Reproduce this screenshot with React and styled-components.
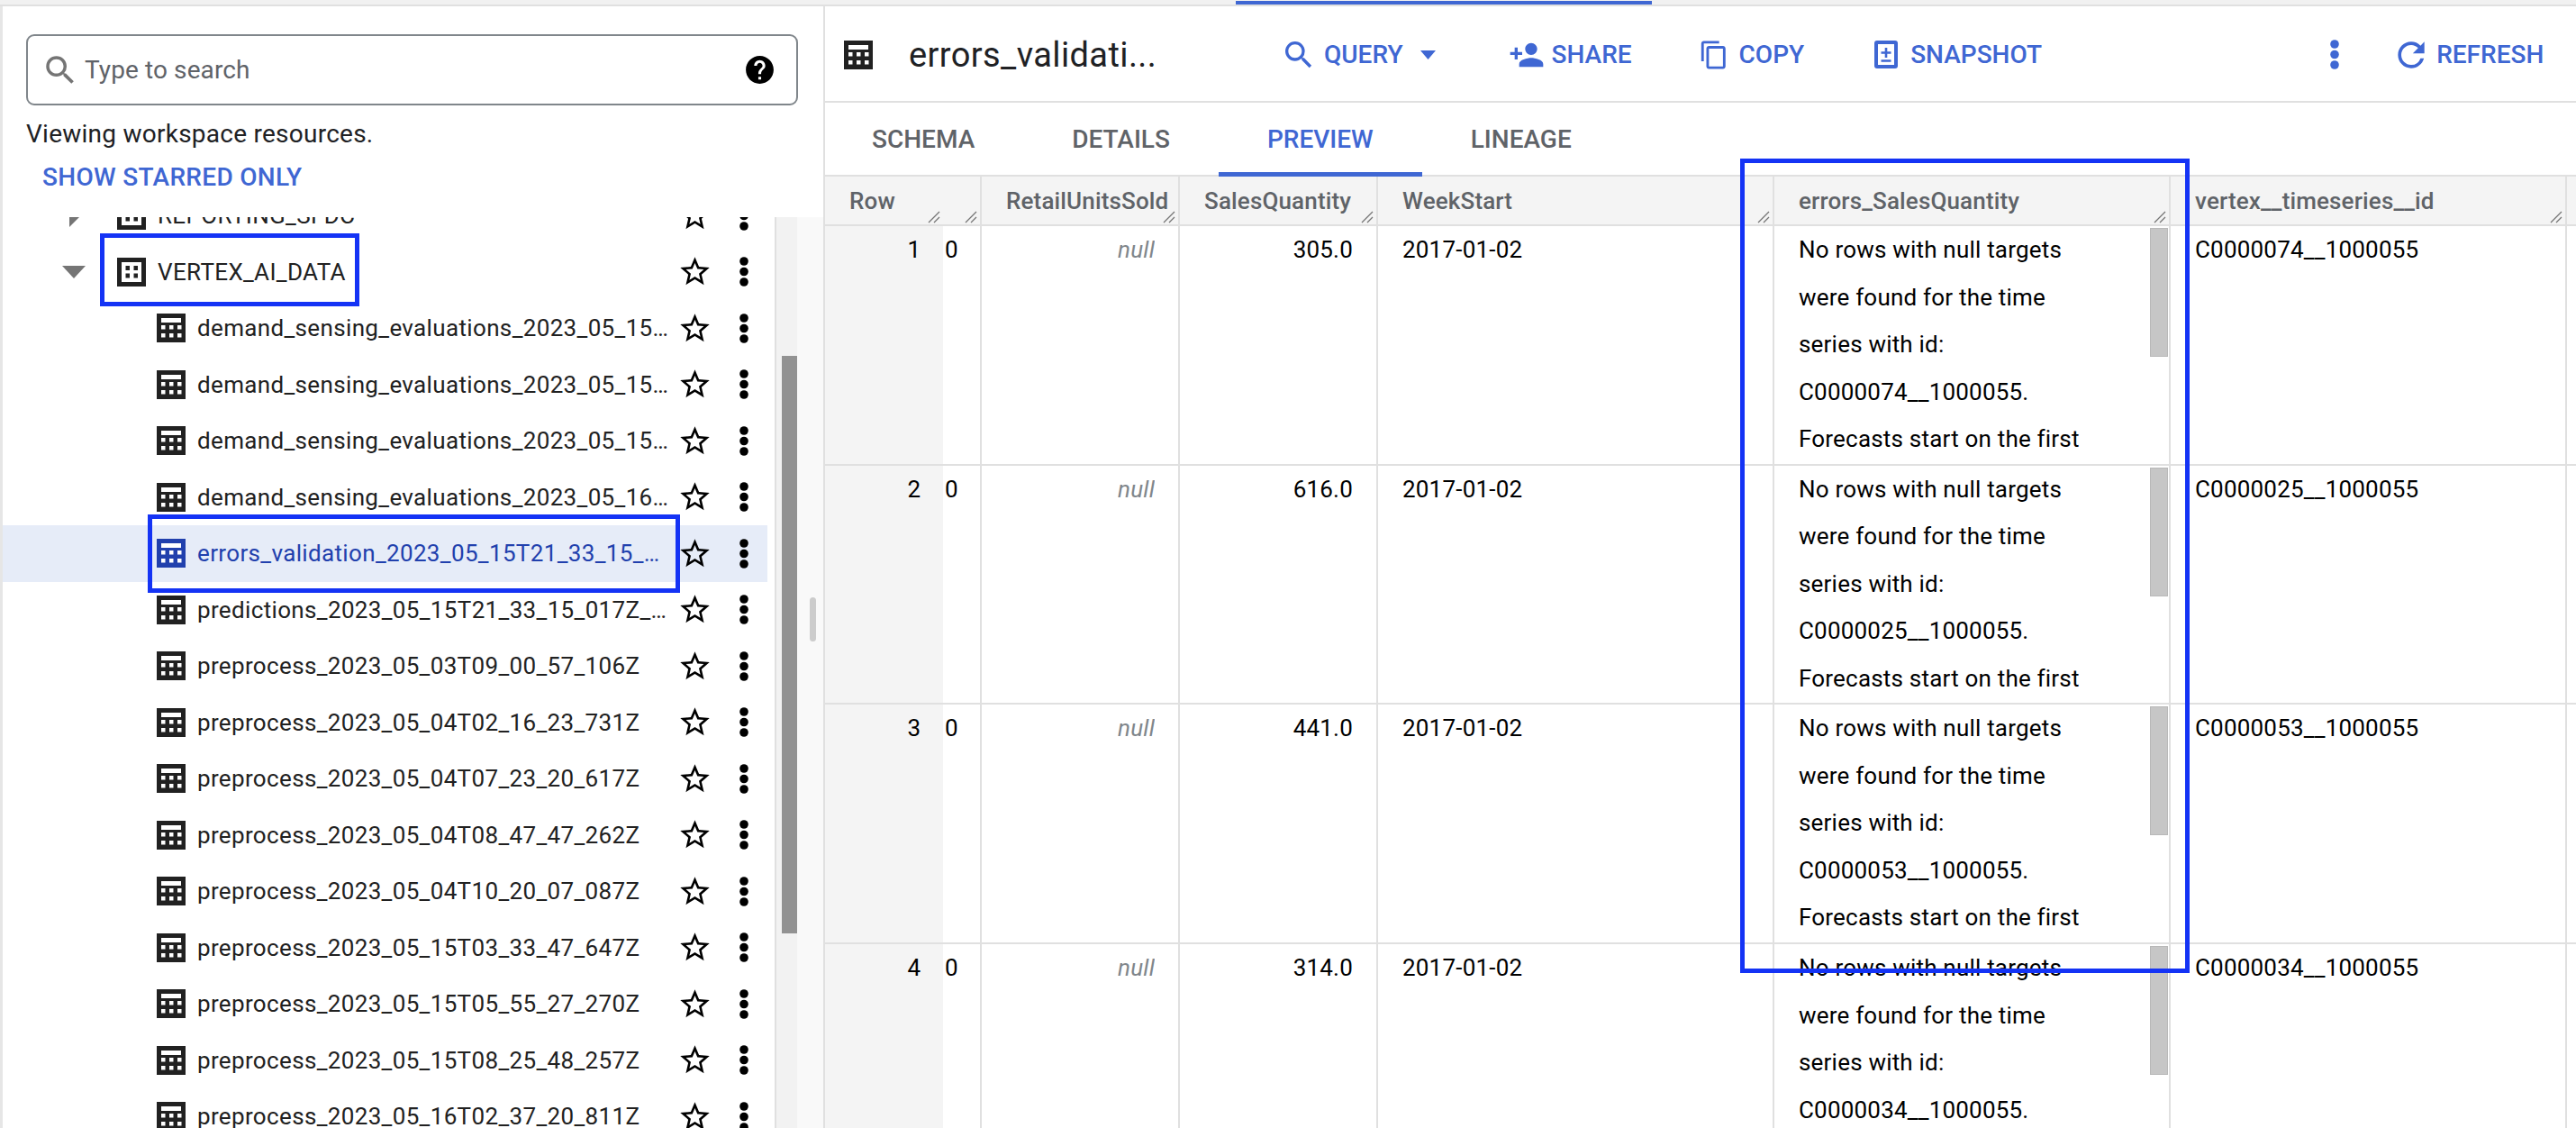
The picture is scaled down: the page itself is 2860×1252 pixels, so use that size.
import React from 'react';
import styled, { createGlobalStyle } from 'styled-components';
import { MdSearch, MdHelp, MdStarBorder, MdPersonAdd, MdContentCopy, MdRefresh } from 'react-icons/md';

const TABLES = [
  'demand_sensing_evaluations_2023_05_15T21_33_15_017Z_a',
  'demand_sensing_evaluations_2023_05_15T21_33_15_017Z_b',
  'demand_sensing_evaluations_2023_05_15T21_33_15_017Z_c',
  'demand_sensing_evaluations_2023_05_16T02_37_20_811Z_a',
  'errors_validation_2023_05_15T21_33_15_017Z_forecast',
  'predictions_2023_05_15T21_33_15_017Z_forecast_eval',
  'preprocess_2023_05_03T09_00_57_106Z',
  'preprocess_2023_05_04T02_16_23_731Z',
  'preprocess_2023_05_04T07_23_20_617Z',
  'preprocess_2023_05_04T08_47_47_262Z',
  'preprocess_2023_05_04T10_20_07_087Z',
  'preprocess_2023_05_15T03_33_47_647Z',
  'preprocess_2023_05_15T05_55_27_270Z',
  'preprocess_2023_05_15T08_25_48_257Z',
  'preprocess_2023_05_16T02_37_20_811Z',
];

const ROWS = [
  { n: 1, qty: '305.0', id: 'C0000074__1000055' },
  { n: 2, qty: '616.0', id: 'C0000025__1000055' },
  { n: 3, qty: '441.0', id: 'C0000053__1000055' },
  { n: 4, qty: '314.0', id: 'C0000034__1000055' },
];

const COLS = [131, 43, 220, 220, 440, 440, 440];

const errorLines = (id) => [
  'No rows with null targets',
  'were found for the time',
  'series with id:',
  `${id}.`,
  'Forecasts start on the first',
];

const TableIcon = ({ size = 32 }) => (
  <svg width={size} height={size} viewBox="0 0 32 32">
    <rect width="32" height="32" fill="currentColor" />
    <rect x="5" y="5" width="22" height="5" fill="#fff" />
    <rect x="5" y="13" width="4.5" height="4.5" fill="#fff" />
    <rect x="14" y="13" width="4.5" height="4.5" fill="#fff" />
    <rect x="23" y="13" width="4.5" height="4.5" fill="#fff" />
    <rect x="5" y="22" width="4.5" height="4.5" fill="#fff" />
    <rect x="14" y="22" width="4.5" height="4.5" fill="#fff" />
    <rect x="23" y="22" width="4.5" height="4.5" fill="#fff" />
  </svg>
);

const DatasetIcon = () => (
  <svg width="32" height="32" viewBox="0 0 32 32">
    <path fill="#212121" fillRule="evenodd" d="M0 0h32v32H0zM5 5v22h22V5z" />
    <rect x="9.5" y="9" width="4.5" height="5" fill="#212121" />
    <rect x="18.5" y="9" width="4.5" height="5" fill="#212121" />
    <rect x="9.5" y="17.5" width="4.5" height="5" fill="#212121" />
    <rect x="18.5" y="17.5" width="4.5" height="5" fill="#212121" />
  </svg>
);

const Dots = ({ height = 33 }) => (
  <svg width="10" height={height} viewBox="0 0 10 33">
    <circle cx="5" cy="5" r="4.8" fill="currentColor" />
    <circle cx="5" cy="16.5" r="4.8" fill="currentColor" />
    <circle cx="5" cy="28" r="4.8" fill="currentColor" />
  </svg>
);

const Caret = ({ open }) => (
  <svg width="26" height="26" viewBox="0 0 26 26">
    {open ? <path d="M0 6h26L13 20z" fill="#757575" /> : <path d="M8 0l13 13-13 13z" fill="#757575" />}
  </svg>
);

const Grip = () => (
  <svg width="14" height="14" viewBox="0 0 14 14">
    <path d="M13 1L1 13M13 7l-6 6" stroke="#757575" strokeWidth="1.3" fill="none" />
  </svg>
);

const SnapshotIcon = () => (
  <svg width="26" height="31" viewBox="0 0 26 31">
    <rect x="2" y="2" width="22" height="27" rx="1" fill="none" stroke="currentColor" strokeWidth="4" />
    <path d="M13 8v11M7.5 13.5h11M7.5 22.5h11" stroke="currentColor" strokeWidth="2.6" fill="none" />
  </svg>
);

const DownArrow = () => (
  <svg width="17" height="10" viewBox="0 0 17 10">
    <path d="M0 0h17L8.5 10z" fill="currentColor" />
  </svg>
);

const App = () => {
  return (
    <Page>
      <GlobalStyle />
      <TopStrip>
        <ActiveBar />
      </TopStrip>
      <Body>
        <LeftPanel>
          <LeftHead>
            <SearchBox>
              <MdSearch size={42} color="#757575" />
              <Placeholder>Type to search</Placeholder>
              <MdHelp size={37} color="#000" />
            </SearchBox>
            <Viewing>Viewing workspace resources.</Viewing>
            <Starred>SHOW STARRED ONLY</Starred>
          </LeftHead>
          <TreeArea>
            <TreeList>
              <TreeInner>
                <TreeRow $indent={63}>
                  <CaretSlot><Caret /></CaretSlot>
                  <DatasetIcon />
                  <RowName>REPORTING_SFDC</RowName>
                  <RowStar><MdStarBorder size={39} /></RowStar>
                  <RowDots><Dots /></RowDots>
                </TreeRow>
                <TreeRow $indent={63}>
                  <CaretSlot><Caret open /></CaretSlot>
                  <DatasetIcon />
                  <RowName>VERTEX_AI_DATA</RowName>
                  <RowStar><MdStarBorder size={39} /></RowStar>
                  <RowDots><Dots /></RowDots>
                </TreeRow>
                {TABLES.map((name) => {
                  const selected = name.startsWith('errors');
                  return (
                    <TreeRow key={name} $indent={171} $selected={selected}>
                      <TableIcon />
                      <RowName>{name}</RowName>
                      <RowStar><MdStarBorder size={39} /></RowStar>
                      <RowDots><Dots /></RowDots>
                    </TreeRow>
                  );
                })}
              </TreeInner>
            </TreeList>
            <ScrollTrack>
              <ScrollThumb />
            </ScrollTrack>
            <Splitter>
              <SplitGrip />
            </Splitter>
          </TreeArea>
        </LeftPanel>

        <RightPanel>
          <Toolbar>
            <ToolTitleIcon><TableIcon /></ToolTitleIcon>
            <Title>errors_validati...</Title>
            <ToolButton $left={142}>
              <MdSearch size={40} />
              <ToolLabel>QUERY</ToolLabel>
              <ArrowSlot><DownArrow /></ArrowSlot>
            </ToolButton>
            <ToolButton $left={81}>
              <MdPersonAdd size={40} />
              <ToolLabel>SHARE</ToolLabel>
            </ToolButton>
            <ToolButton $left={74}>
              <MdContentCopy size={34} />
              <ToolLabel $gap={11}>COPY</ToolLabel>
            </ToolButton>
            <ToolButton $left={78}>
              <SnapshotIcon />
              <ToolLabel $gap={14}>SNAPSHOT</ToolLabel>
            </ToolButton>
            <ToolButton $left={320}>
              <Dots height={35} />
            </ToolButton>
            <ToolButton $left={58}>
              <MdRefresh size={44} />
              <ToolLabel $gap={6}>REFRESH</ToolLabel>
            </ToolButton>
          </Toolbar>
          <Tabs>
            <Tab>SCHEMA</Tab>
            <Tab>DETAILS</Tab>
            <Tab $active>PREVIEW</Tab>
            <Tab>LINEAGE</Tab>
          </Tabs>
          <TableHead>
            <HeadCell $width={COLS[0]} $plain>Row<HandleSpot><Grip /></HandleSpot></HeadCell>
            <HeadCell $width={COLS[1]} $blank><HandleSpot><Grip /></HandleSpot></HeadCell>
            <HeadCell $width={COLS[2]}>RetailUnitsSold<HandleSpot><Grip /></HandleSpot></HeadCell>
            <HeadCell $width={COLS[3]}>SalesQuantity<HandleSpot><Grip /></HandleSpot></HeadCell>
            <HeadCell $width={COLS[4]}>WeekStart<HandleSpot><Grip /></HandleSpot></HeadCell>
            <HeadCell $width={COLS[5]}>errors_SalesQuantity<HandleSpot><Grip /></HandleSpot></HeadCell>
            <HeadCell $width={COLS[6]}>vertex__timeseries__id<HandleSpot><Grip /></HandleSpot></HeadCell>
          </TableHead>
          {ROWS.map((row) => (
            <DataRow key={row.n}>
              <RowNumber $width={COLS[0]}>{row.n}</RowNumber>
              <ZeroCell $width={COLS[1]}>0</ZeroCell>
              <DataCell $width={COLS[2]} $right><NullText>null</NullText></DataCell>
              <DataCell $width={COLS[3]} $right>{row.qty}</DataCell>
              <DataCell $width={COLS[4]}>2017-01-02</DataCell>
              <DataCell $width={COLS[5]}>
                {errorLines(row.id).map((line) => <TextLine key={line}>{line}</TextLine>)}
                <CellThumb />
              </DataCell>
              <DataCell $width={COLS[6]}>{row.id}</DataCell>
            </DataRow>
          ))}
        </RightPanel>
      </Body>

      <Callout $x={111} $y={259} $w={288} $h={81} />
      <Callout $x={164} $y={571} $w={591} $h={87} />
      <Callout $x={1932} $y={176} $w={499} $h={904} />
    </Page>
  );
};

const GlobalStyle = createGlobalStyle`
  html, body {
    margin: 0;
    padding: 0;
    background: #ffffff;
  }
  * {
    box-sizing: border-box;
  }
`;

const Page = styled.div`
  position: relative;
  width: 2860px;
  height: 1252px;
  overflow: hidden;
  font-family: Roboto, "Liberation Sans", sans-serif;
  color: #202124;
  background: #ffffff;
`;

const TopStrip = styled.div`
  height: 7px;
  padding: 1px 0 0 1372px;
  background: #f1f1f1;
  border-bottom: 2px solid #e0e0e0;
`;

const ActiveBar = styled.div`
  width: 462px;
  height: 4px;
  background: #3f67d3;
`;

const Body = styled.div`
  display: flex;
  height: 1245px;
`;

const LeftPanel = styled.aside`
  width: 914px;
  display: flex;
  flex-direction: column;
  border-left: 3px solid #e6e6e6;
`;

const LeftHead = styled.div`
  height: 234px;
  padding: 31px 28px 0 26px;
  flex-shrink: 0;
`;

const SearchBox = styled.div`
  height: 79px;
  display: flex;
  align-items: center;
  padding: 0 22px 0 15px;
  border: 2px solid #80868b;
  border-radius: 9px;
`;

const Placeholder = styled.span`
  flex: 1;
  margin-left: 6px;
  font-size: 28px;
  letter-spacing: 0.1px;
  color: #5f6368;
`;

const Viewing = styled.div`
  margin-top: 12px;
  font-size: 28px;
  line-height: 40px;
  letter-spacing: 0.25px;
  color: #202124;
`;

const Starred = styled.div`
  margin: 8px 0 0 18px;
  font-size: 28px;
  line-height: 40px;
  letter-spacing: 0.3px;
  font-weight: 500;
  color: #3f67d3;
`;

const TreeArea = styled.div`
  flex: 1;
  min-height: 0;
  display: flex;
`;

const TreeList = styled.div`
  width: 857px;
  padding-right: 8px;
  overflow: hidden;
`;

const TreeInner = styled.div`
  margin-top: -33px;
`;

const TreeRow = styled.div`
  height: 62.5px;
  display: flex;
  align-items: center;
  padding: 0 21px 0 ${(props) => props.$indent}px;
  background: ${(props) => (props.$selected ? '#e6ecf8' : 'transparent')};
  color: ${(props) => (props.$selected ? '#2140ad' : '#212121')};
`;

const CaretSlot = styled.span`
  width: 64px;
  padding-left: 3px;
  display: flex;
`;

const RowName = styled.span`
  flex: 1;
  min-width: 0;
  margin: 0 9px 0 13px;
  font-size: 26px;
  letter-spacing: 0.35px;
  overflow: hidden;
  white-space: nowrap;
  text-overflow: ellipsis;
`;

const RowStar = styled.span`
  width: 39px;
  display: flex;
  color: #000000;
`;

const RowDots = styled.span`
  margin-left: 30px;
  display: flex;
  color: #000000;
`;

const ScrollTrack = styled.div`
  width: 25px;
  padding: 154px 0 0 6px;
  background: #f2f2f2;
  border-left: 2px solid #e0e0e0;
`;

const ScrollThumb = styled.div`
  width: 19px;
  height: 641px;
  background: #929292;
`;

const Splitter = styled.div`
  flex: 1;
  padding: 422px 0 0 14px;
  background: #f9f9f9;
`;

const SplitGrip = styled.div`
  width: 7px;
  height: 49px;
  border-radius: 4px;
  background: #cccccc;
`;

const RightPanel = styled.main`
  flex: 1;
  min-width: 0;
  border-left: 2px solid #e0e0e0;
`;

const Toolbar = styled.div`
  height: 107px;
  display: flex;
  align-items: center;
  padding: 2px 0 0 21px;
  border-bottom: 2px solid #e0e0e0;
`;

const ToolTitleIcon = styled.span`
  display: flex;
  color: #212121;
`;

const Title = styled.span`
  width: 271px;
  margin-left: 40px;
  font-size: 38px;
  letter-spacing: 0.4px;
  color: #202124;
  white-space: nowrap;
`;

const ToolButton = styled.div`
  display: flex;
  align-items: center;
  margin-left: ${(props) => props.$left}px;
  color: #3f67d3;
`;

const ToolLabel = styled.span`
  margin-left: ${(props) => props.$gap ?? 8}px;
  font-size: 28px;
  font-weight: 500;
`;

const ArrowSlot = styled.span`
  display: flex;
  margin-left: 19px;
`;

const Tabs = styled.div`
  height: 82px;
  display: flex;
  margin-left: -2px;
  border-bottom: 2px solid #e0e0e0;
`;

const Tab = styled.div`
  display: flex;
  align-items: center;
  padding: 3px 54px 0;
  margin-bottom: -2px;
  font-size: 28px;
  font-weight: 500;
  color: ${(props) => (props.$active ? '#3f67d3' : '#5f6368')};
  border-bottom: 5px solid ${(props) => (props.$active ? '#3f67d3' : 'transparent')};
`;

const TableHead = styled.div`
  height: 55px;
  display: flex;
  background: #f4f4f4;
  border-bottom: 2px solid #e0e0e0;
`;

const HeadCell = styled.div`
  position: relative;
  flex: 0 0 ${(props) => props.$width}px;
  display: flex;
  align-items: center;
  padding-left: ${(props) => (props.$blank ? 0 : 27)}px;
  font-size: 26px;
  letter-spacing: 0.15px;
  font-weight: 500;
  color: #5f6368;
  white-space: nowrap;
  border-right: ${(props) => (props.$plain ? 'none' : '2px solid #e0e0e0')};
`;

const HandleSpot = styled.span`
  position: absolute;
  right: 3px;
  bottom: 1px;
  display: flex;
`;

const DataRow = styled.div`
  height: 265.7px;
  display: flex;
  border-bottom: 2px solid #e0e0e0;
  overflow: hidden;
`;

const RowNumber = styled.div`
  flex: 0 0 ${(props) => props.$width}px;
  padding-right: 25px;
  text-align: right;
  font-size: 26px;
  line-height: 52.5px;
  color: #000000;
  background: #f4f4f4;
`;

const ZeroCell = styled.div`
  flex: 0 0 ${(props) => props.$width}px;
  padding-left: 2px;
  font-size: 26px;
  line-height: 52.5px;
  color: #000000;
  border-right: 2px solid #e0e0e0;
`;

const DataCell = styled.div`
  position: relative;
  flex: 0 0 ${(props) => props.$width}px;
  padding: 0 26px 0 27px;
  text-align: ${(props) => (props.$right ? 'right' : 'left')};
  font-size: 26px;
  letter-spacing: 0.2px;
  line-height: 52.5px;
  color: #000000;
  white-space: nowrap;
  border-right: 2px solid #e0e0e0;
`;

const TextLine = styled.div`
  line-height: 52.5px;
`;

const NullText = styled.span`
  display: inline-block;
  overflow: hidden;
  font-style: italic;
  color: #80868b;
`;

const CellThumb = styled.div`
  position: absolute;
  top: 2px;
  right: 1px;
  width: 20px;
  height: 143px;
  background: #c6c6c6;
  border: 1px solid #b8b8b8;
`;

const Callout = styled.div`
  position: absolute;
  left: ${(props) => props.$x}px;
  top: ${(props) => props.$y}px;
  width: ${(props) => props.$w}px;
  height: ${(props) => props.$h}px;
  border: 5px solid #1433f5;
`;

export default App;
